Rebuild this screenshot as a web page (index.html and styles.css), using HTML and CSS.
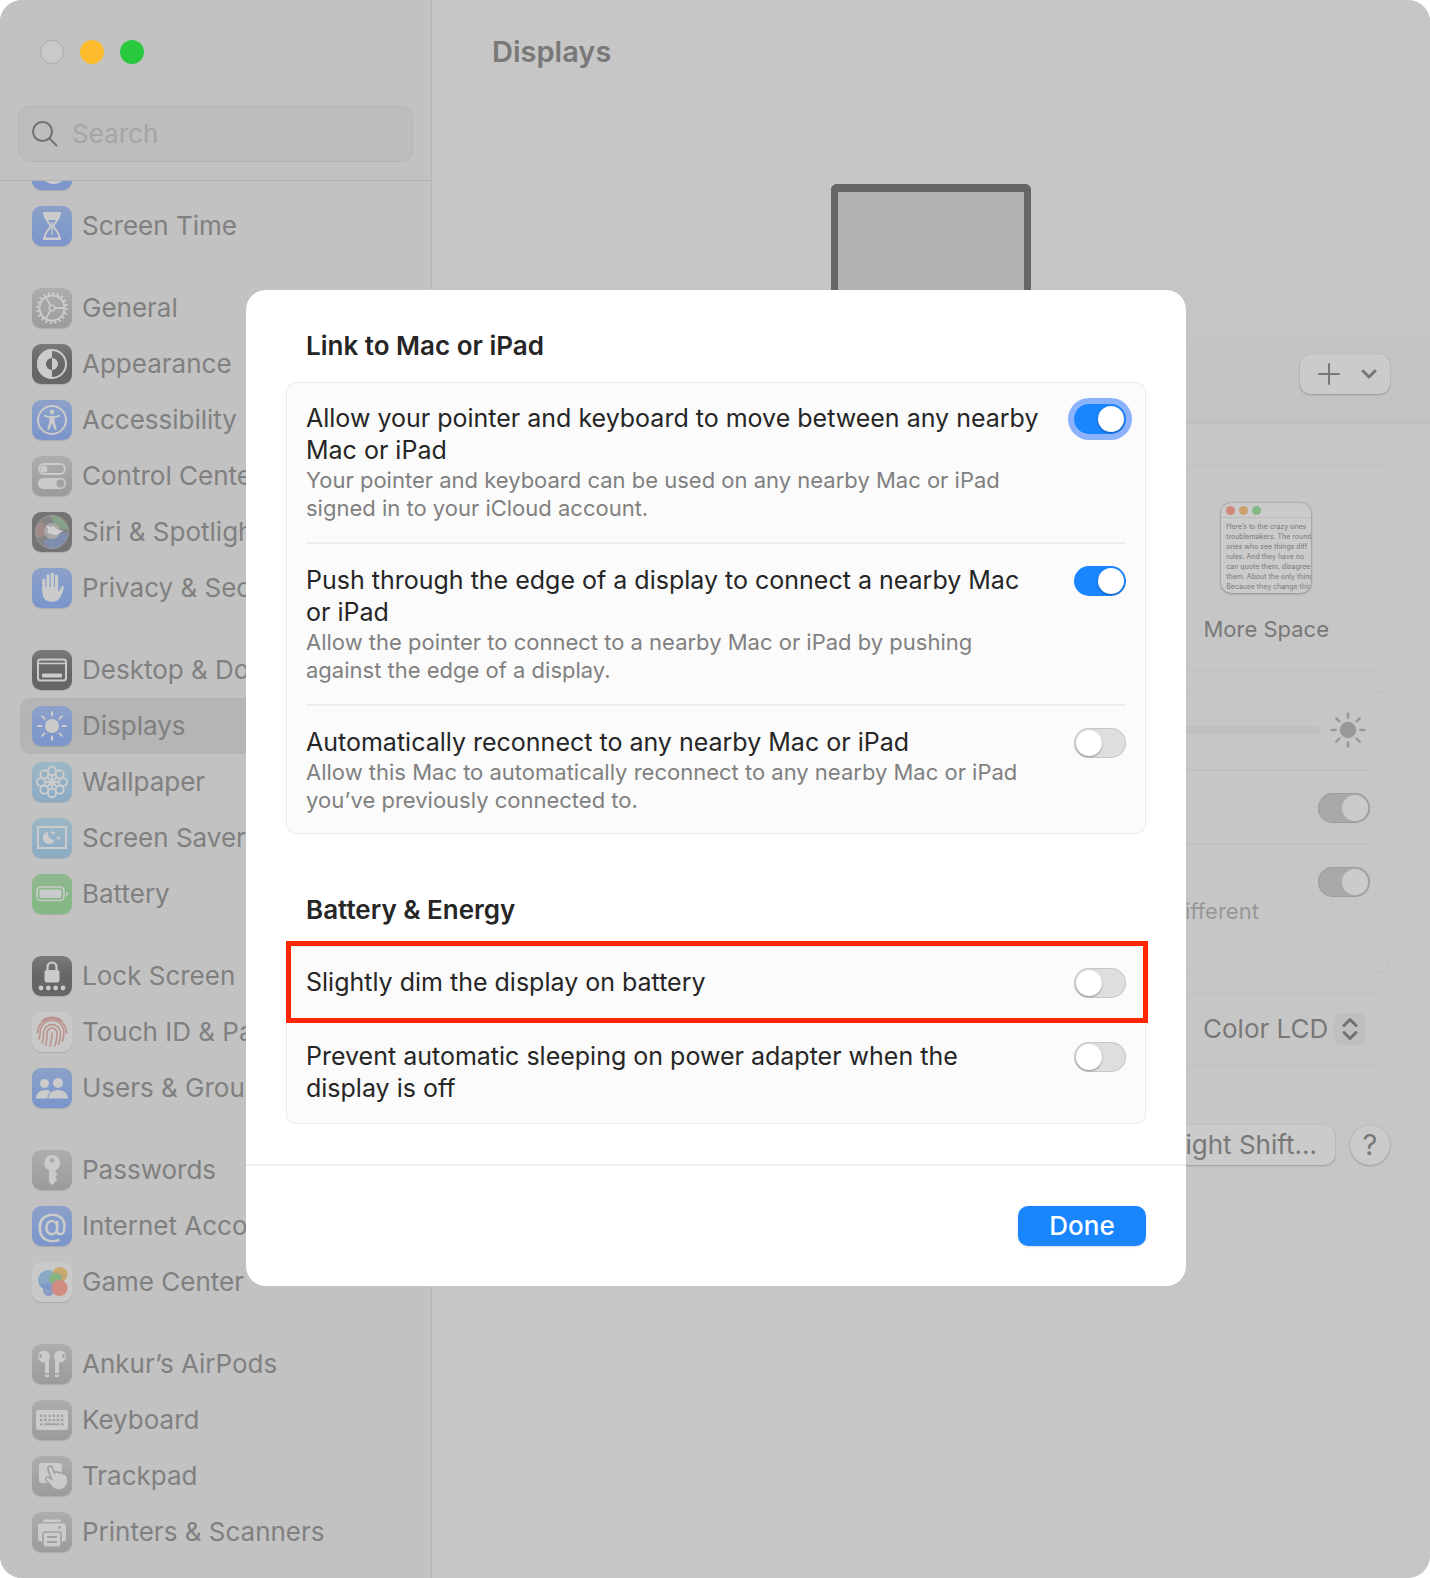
FILE: index.html
```html
<!DOCTYPE html>
<html lang="en">
<head>
    <meta charset="UTF-8" />
    <meta name="viewport" content="width=device-width, initial-scale=1" />
    <title>Displays</title>
    <link rel="stylesheet" href="styles.css">
</head>
<body>
    <div class="window">

        <aside class="sidebar">
            <div class="sidebar-top">
                <div class="traffic">
                    <span class="dot dot-close"></span>
                    <span class="dot dot-min"></span>
                    <span class="dot dot-zoom"></span>
                </div>
                <label class="search">
                    <svg width="26" height="26" viewBox="0 0 26 26" aria-hidden="true"><circle cx="10.5" cy="10.5" r="9.5" /><path d="M17.5 17.5L24.5 24.5" /></svg>
                    <input type="search" placeholder="Search" aria-label="Search">
                </label>
            </div>

            <nav class="nav">
                <ul class="nav-list">
                    <li><a href="#"><span class="icon blue"><svg viewBox="0 0 40 40"><path d="M20 6a14 14 0 1 0 14 20A14 14 0 0 1 20 6z" /><circle cx="20" cy="22" r="11" /></svg></span>Focus</a></li>
                    <li><a href="#"><span class="icon blue"><svg viewBox="0 0 40 40"><path d="M12 7.200h16M12 32.800h16" stroke-width="2.500" class="line" /><path d="M12.500 7C12.500 15 18.500 17 18.500 20S12.500 25 12.500 33M27.500 7C27.500 15 21.500 17 21.500 20S27.500 25 27.500 33" class="line" stroke-width="2" /><path d="M12 7h16c0 3-1 5-2.500 7h-11C13 12 12 10 12 7z" /><path d="M20 17v11" class="line" stroke-width="1.500" /></svg></span>Screen Time</a></li>

                    <li class="gap"><a href="#"><span class="icon gray"><svg viewBox="0 0 40 40"><circle cx="20" cy="20" r="14.500" class="line" stroke-width="3" stroke-dasharray="1.900 2.655" /><circle cx="20" cy="20" r="12.500" class="line" stroke-width="2" /><circle cx="20" cy="20" r="2.800" class="line" stroke-width="1.600" /><path d="M23 20h9M18.500 17.400L14 9.600M18.500 22.600L14 30.400" class="line" stroke-width="1.800" /></svg></span>General</a></li>
                    <li><a href="#"><span class="icon dark"><svg viewBox="0 0 40 40"><circle cx="20" cy="20" r="14" class="line" stroke-width="2" /><path d="M20 5a15 15 0 0 0 0 30v-9a6 6 0 0 1 0-12zM20 14a6 6 0 0 1 0 12z" /></svg></span>Appearance</a></li>
                    <li><a href="#"><span class="icon blue"><svg viewBox="0 0 40 40"><circle cx="20" cy="20" r="14" class="line" stroke-width="2" /><circle cx="20" cy="12" r="2.400" /><path d="M12 14.800c5 1.600 11 1.600 16 0v1.800c-2 .7-3.800 1-5.200 1.200v4l2 8h-2.200L20.300 24h-.6l-2.300 5.800h-2.200l2-8v-4c-1.400-.2-3.200-.5-5.200-1.200z" /></svg></span>Accessibility</a></li>
                    <li><a href="#"><span class="icon gray"><svg viewBox="0 0 40 40"><rect x="7" y="8" width="26" height="10" rx="5" class="line" stroke-width="2" /><circle cx="12" cy="13" r="3.500" /><rect x="6" y="22" width="28" height="11" rx="5.500" /><circle cx="28.500" cy="27.500" r="4" class="cut-gray" /></svg></span>Control Center</a></li>
                    <li><a href="#"><span class="icon siri"><svg viewBox="0 0 40 40"><circle cx="20" cy="20" r="16.500" fill="#858585" /><path d="M18 4c9-2 17 5 18.500 13L26 17z" fill="#87a088" /><path d="M4 21c0-6 2-10 5-12l9 10-9 7c-3 0-5-1-5-5z" fill="#a08b89" /><path d="M36 21c0 9-8 16-17 15-4-1-6-3-8-6l12-9z" fill="#7f8eae" /><circle cx="20" cy="19" r="8" fill="#a8a8a8" /><path d="M14 14c3-1 5 2 8 0 2 4 5 4 10 5-5 1-6 5-9 4s-5-1-8-3c2-1 1-4-1-6z" fill="#d0d0d0" /><circle cx="20" cy="20" r="16.500" class="rim" /></svg></span>Siri &amp; Spotlight</a></li>
                    <li><a href="#"><span class="icon blue"><svg viewBox="0 0 40 40"><path d="M11.800 12v12M16 7.500v14M20.300 6v14M24.600 8v14" class="line" stroke-width="3.200" /><path d="M10.200 19h16v5c1.500-1 2.500-4 3.500-5.500.8-1.200 2.600-.6 2.200 1-1 4-2.500 8-4.500 11-3 4.500-13 4.500-15.500-.5-1.500-3-1.700-6-1.700-11z" /></svg></span>Privacy &amp; Security</a></li>

                    <li class="gap"><a href="#"><span class="icon dark"><svg viewBox="0 0 40 40"><rect x="6" y="9.500" width="28" height="21" rx="2.500" class="line" stroke-width="2" /><path d="M7 13.500h26" class="line" stroke-width="1.600" /><rect x="10" y="23.500" width="20" height="4" rx="1" /></svg></span>Desktop &amp; Dock</a></li>
                    <li><a href="#" class="selected"><span class="icon blue"><svg viewBox="0 0 40 40"><circle cx="20" cy="20" r="7" /><path d="M20 6v3.500M20 30.500V34M6 20h3.500M30.500 20H34M10.100 10.100l2.500 2.500M27.400 27.400l2.500 2.500M29.900 10.100l-2.500 2.500M12.600 27.400l-2.500 2.500" class="line" stroke-width="2" /></svg></span>Displays</a></li>
                    <li><a href="#"><span class="icon sky"><svg viewBox="0 0 40 40"><g class="line" stroke-width="1.900"><ellipse cx="20" cy="9" rx="4" ry="4.200" /><ellipse cx="20" cy="31" rx="4" ry="4.200" /><ellipse cx="9" cy="20" rx="4.200" ry="4" /><ellipse cx="31" cy="20" rx="4.200" ry="4" /><circle cx="12.300" cy="12.300" r="4" /><circle cx="27.700" cy="12.300" r="4" /><circle cx="12.300" cy="27.700" r="4" /><circle cx="27.700" cy="27.700" r="4" /><path d="M20 13.500v13M13.500 20h13M15.400 15.400l9.200 9.200M24.600 15.400l-9.200 9.200" /></g><circle cx="20" cy="20" r="2.500" /></svg></span>Wallpaper</a></li>
                    <li><a href="#"><span class="icon sky"><svg viewBox="0 0 40 40"><rect x="6" y="9" width="28" height="21" class="line sharp" stroke-width="2" /><path d="M16 14a6 6 0 1 0 6.500 8A6.500 6.500 0 0 1 16 14zM21 12l.8 2 2 .8-2 .8-.8 2-.8-2-2-.8 2-.8zM26.500 17l.7 2.300 2 .7-2 .7-.7 2.300-.7-2.300-2-.7 2-.7z" /></svg></span>Screen Saver</a></li>
                    <li><a href="#"><span class="icon green"><svg viewBox="0 0 40 40"><rect x="5" y="13" width="27" height="13.500" rx="4" class="line" stroke-width="1.600" /><rect x="7.500" y="15.500" width="22" height="8.500" rx="2" /><path d="M34 17.500c2.500.8 2.500 4 0 4.800z" /></svg></span>Battery</a></li>

                    <li class="gap"><a href="#"><span class="icon dark"><svg viewBox="0 0 40 40"><rect x="12.500" y="14" width="15" height="12.500" rx="2.500" /><path d="M15.500 15v-4a4.500 4.500 0 0 1 9 0v4" class="line" stroke-width="2.200" /><circle cx="9" cy="32" r="2.400" /><circle cx="16.300" cy="32" r="2.400" /><circle cx="23.600" cy="32" r="2.400" /><circle cx="31" cy="32" r="2.400" /></svg></span>Lock Screen</a></li>
                    <li><a href="#"><span class="icon plain"><svg viewBox="0 0 40 40"><g class="finger"><path d="M10 9a15 15 0 0 1 20 0" /><path d="M5.500 21a14.500 14.500 0 0 1 29 0" /><path d="M7 27c1-2 1-4 1.200-7a11.800 11.800 0 0 1 23.600 0c.2 3-.3 6-1.300 9" /><path d="M10 31c1.500-3 1.500-7 1.500-10a8.500 8.500 0 0 1 17 0c0 4-.5 8-2 11.500" /><path d="M13.500 33c1.500-4 1.500-8 1.500-12a5 5 0 0 1 10 0c0 5-.5 9-2.500 13" /><path d="M18 34c1.500-4 2-8 2-13" /></g></svg></span>Touch ID &amp; Password</a></li>
                    <li><a href="#"><span class="icon blue"><svg viewBox="0 0 40 40"><circle cx="12.500" cy="15.500" r="4.500" /><path d="M4 30.500c0-5 4-8.500 9-8.500s5 1 5.500 2c-2 1.500-3 4-3 6.500z" /><circle cx="26" cy="15" r="5" /><path d="M16.500 30.500c0-5 4-8.500 9.500-8.500s10 3.500 10 8.500z" /></svg></span>Users &amp; Groups</a></li>

                    <li class="gap"><a href="#"><span class="icon gray"><svg viewBox="0 0 40 40"><path fill-rule="evenodd" d="M20 5a8 8 0 0 1 3.500 15.200V22l2.300 2.300-2.600 2.900 2 2.300L20.500 35 17 32V20.200A8 8 0 0 1 20 5zm0 3a2.300 2.300 0 1 0 0 4.600A2.300 2.300 0 0 0 20 8z" /></svg></span>Passwords</a></li>
                    <li><a href="#"><span class="icon blue at">@</span>Internet Accounts</a></li>
                    <li><a href="#"><span class="icon plain"><svg viewBox="0 0 40 40"><circle cx="16.500" cy="28.500" r="5.500" fill="#8c9cc4" /><circle cx="16" cy="18" r="10" fill="#8ba9c4" /><path d="M7 22a10 10 0 0 0 17 2l-6-3z" fill="#8098c6" /><circle cx="28" cy="12.500" r="7.500" fill="#c9a870" /><path d="M18 13a8 8 0 0 1 12 1 8 8 0 0 1-3 7 7 7 0 0 1-10-2z" fill="#86b284" /><circle cx="27.500" cy="26" r="8" fill="#d08c80" /></svg></span>Game Center</a></li>

                    <li class="gap"><a href="#"><span class="icon gray"><svg viewBox="0 0 40 40"><circle cx="12" cy="12.500" r="6" /><circle cx="28" cy="12.500" r="6" /><path d="M13 12h4v17h-4zM23 12h4v17h-4zM13 30.500h4v2.500h-4zM23 30.500h4v2.500h-4z" /><path d="M8.500 10v4M31.500 10v4" class="slot" /></svg></span>Ankur’s AirPods</a></li>
                    <li><a href="#"><span class="icon gray"><svg viewBox="0 0 40 40"><rect x="4" y="10" width="32" height="20" rx="2.500" /><path d="M8 15.700h24.500M8 20h24.500" class="keys" /><path d="M8 24.300h2.400M12.500 24.300h15M29.200 24.300h2.400" class="slot" /></svg></span>Keyboard</a></li>
                    <li><a href="#"><span class="icon gray"><svg viewBox="0 0 40 40"><rect x="7" y="7" width="23" height="20" rx="3" /><path d="M17 10.500c1.500-1 3 0 3.500 1.500l2 5c1.500-1.500 3.500-1.500 4.500 0 1.500-1 3.500-.5 4 1 2-.5 3.300.3 4 2 1.500 4 1.500 8-2 11.500-5 4-11 2.500-14-1.500l-5-6c-.8-2 1-3.400 3-2.500l2.500 1.500-3.500-9c-.4-1.500 0-2.900 1-3.500z" class="outlined" /></svg></span>Trackpad</a></li>
                    <li><a href="#"><span class="icon gray"><svg viewBox="0 0 40 40"><path d="M12 7.500h16l1 2.500H11z" /><rect x="6" y="11.500" width="28" height="18" rx="3" /><circle cx="27.500" cy="15.500" r="1.400" class="cut-gray" /><rect x="11" y="20" width="18" height="15" rx="2" class="outlined" /><path d="M15 25h10M15 30h10" class="slot" /></svg></span>Printers &amp; Scanners</a></li>
                </ul>
            </nav>
        </aside>

        <main class="main">
            <header class="hero">
                <h1>Displays</h1>
                <div class="laptop"></div>
                <div class="hero-actions">
                    <button type="button" class="btn add" aria-label="Add display">
                        <svg width="22" height="22" viewBox="0 0 22 22"><path d="M11 1v20M1 11h20" stroke-width="2" /></svg>
                        <svg width="16" height="16" viewBox="0 0 16 16"><path d="M2 5l6 6 6-6" stroke-width="3" /></svg>
                    </button>
                </div>
            </header>

            <div class="content">
                <section class="card sizes">
                    <div class="size">
                        <div class="thumb">
                            <div class="thumb-bar"><i class="r"></i><i class="y"></i><i class="g"></i></div>
                        </div>
                        <span>Larger Text</span>
                    </div>
                    <div class="size">
                        <div class="thumb">
                            <div class="thumb-bar"><i class="r"></i><i class="y"></i><i class="g"></i></div>
                            <p>Here’s to the crazy ones<br>troublemakers. The round<br>ones who see things diff<br>rules. And they have no<br>can quote them, disagree<br>them. About the only thing<br>Because they change things</p>
                        </div>
                        <span>More Space</span>
                    </div>
                </section>

                <section class="card">
                    <div class="row brightness">
                        <label class="row-text" for="brightness">Brightness</label>
                        <input type="range" id="brightness" min="0" max="100" value="40">
                        <svg width="36" height="36" viewBox="0 0 36 36" aria-hidden="true"><circle cx="18" cy="18" r="7" /><path d="M18 1.500v4M18 30.500v4M1.500 18h4M30.500 18h4M6.300 6.300l3 3M26.700 26.700l3 3M29.700 6.300l-3 3M9.300 26.700l-3 3" /></svg>
                    </div>
                    <div class="row">
                        <label class="row-text" for="auto">Automatically adjust brightness</label>
                        <input type="checkbox" class="switch dim" id="auto" checked>
                    </div>
                    <div class="row">
                        <div class="row-text">
                            <label for="tone">True Tone</label>
                            <p>Automatically adapt displays to make colors appear consistent in different<br>ambient lighting conditions.</p>
                        </div>
                        <input type="checkbox" class="switch dim" id="tone" checked>
                    </div>
                </section>

                <section class="card">
                    <div class="row">
                        <label class="row-text" for="profile">Color profile</label>
                        <div class="picker">
                            <select id="profile"><option>Color LCD</option></select>
                            <svg width="32" height="32" viewBox="0 0 32 32" aria-hidden="true"><path d="M10 12.500l6-6 6 6M10 19.500l6 6 6-6" /></svg>
                        </div>
                    </div>
                </section>

                <div class="actions">
                    <button type="button" class="btn">Night Shift...</button>
                    <button type="button" class="btn help">?</button>
                </div>
            </div>
        </main>

        <div class="overlay">
            <div class="modal" role="dialog" aria-label="Advanced">
                <div class="modal-body">
                    <section>
                        <h2>Link to Mac or iPad</h2>
                        <div class="card">
                            <div class="row">
                                <div class="row-text">
                                    <label for="pointer">Allow your pointer and keyboard to move between any nearby<br>Mac or iPad</label>
                                    <p>Your pointer and keyboard can be used on any nearby Mac or iPad<br>signed in to your iCloud account.</p>
                                </div>
                                <input type="checkbox" class="switch focused" id="pointer" checked>
                            </div>
                            <div class="row">
                                <div class="row-text">
                                    <label for="push">Push through the edge of a display to connect a nearby Mac<br>or iPad</label>
                                    <p>Allow the pointer to connect to a nearby Mac or iPad by pushing<br>against the edge of a display.</p>
                                </div>
                                <input type="checkbox" class="switch" id="push" checked>
                            </div>
                            <div class="row">
                                <div class="row-text">
                                    <label for="reconnect">Automatically reconnect to any nearby Mac or iPad</label>
                                    <p>Allow this Mac to automatically reconnect to any nearby Mac or iPad<br>you’ve previously connected to.</p>
                                </div>
                                <input type="checkbox" class="switch" id="reconnect">
                            </div>
                        </div>
                    </section>

                    <section>
                        <h2>Battery &amp; Energy</h2>
                        <div class="card">
                            <div class="row highlight">
                                <label class="row-text" for="dim">Slightly dim the display on battery</label>
                                <input type="checkbox" class="switch" id="dim">
                            </div>
                            <div class="row">
                                <label class="row-text" for="sleep">Prevent automatic sleeping on power adapter when the<br>display is off</label>
                                <input type="checkbox" class="switch" id="sleep">
                            </div>
                        </div>
                    </section>
                </div>
                <footer class="modal-footer">
                    <button type="button" class="done">Done</button>
                </footer>
            </div>
        </div>
    </div>
</body>
</html>
```
FILE: styles.css
```css
* {
    box-sizing: border-box;
}
body {
    margin: 0;
    background: #fff;
    font-family: Inter, "Liberation Sans", sans-serif;
    font-size: 26px;
    line-height: 32px;
}
h1, h2, p, ul {
    margin: 0;
    padding: 0;
}
button, input, select {
    font: inherit;
    color: inherit;
    margin: 0;
}
.window {
    position: relative;
    display: flex;
    min-height: 100vh;
    border-radius: 22px;
    overflow: hidden;
    background: #c6c6c6;
    color: #787878;
}

/* sidebar */
.sidebar {
    flex: none;
    width: 432px;
    background: #c2c2c2;
    border-right: 1px solid #b5b5b5;
}
.sidebar-top {
    padding: 40px 18px 18px;
    border-bottom: 1px solid #b0b0b0;
}
.traffic {
    display: flex;
    gap: 16px;
    padding-left: 22px;
    margin-bottom: 42px;
}
.dot {
    width: 24px;
    height: 24px;
    border-radius: 50%;
}
.dot-close {
    background: #cacaca;
    border: 1px solid #a9a9a9;
}
.dot-min {
    background: #fdbc2e;
}
.dot-zoom {
    background: #29c83f;
}
.search {
    display: flex;
    align-items: center;
    gap: 14px;
    height: 56px;
    padding: 0 13px;
    background: #bdbdbd;
    border: 1px solid #b5b5b5;
    border-radius: 12px;
}
.search svg {
    flex: none;
    fill: none;
    stroke: #707070;
    stroke-width: 2;
    stroke-linecap: round;
}
.search input {
    flex: 1;
    min-width: 0;
    padding: 0;
    border: 0;
    outline: 0;
    background: none;
}
.search input::placeholder {
    color: #a5a5a5;
}
.nav {
    overflow: hidden;
}
/* list is scrolled a little past its first row */
.nav-list {
    list-style: none;
    margin-top: -39px;
    padding: 0 20px 18px;
}
.nav-list .gap {
    margin-top: 26px;
}
.nav-list a {
    display: flex;
    align-items: center;
    gap: 10px;
    height: 56px;
    padding: 0 12px;
    border-radius: 10px;
    color: #808080;
    text-decoration: none;
    white-space: nowrap;
}
.nav-list a.selected {
    background: #b5b5b5;
}
.icon {
    flex: none;
    width: 40px;
    height: 40px;
    border-radius: 9px;
    box-shadow: 0 1px 1px rgba(0,0,0,0.12);
}
.icon svg {
    display: block;
    width: 40px;
    height: 40px;
    fill: #cbcbcb;
}
.icon .line {
    fill: none;
    stroke: #cbcbcb;
    stroke-linecap: round;
}
.icon circle.line, .icon .sharp {
    stroke-linecap: butt;
}
.icon .slot {
    fill: none;
    stroke: #a2a2a2;
    stroke-width: 2;
}
.icon .keys {
    fill: none;
    stroke: #a2a2a2;
    stroke-width: 2.4;
    stroke-dasharray: 2.4 1.8;
}
.icon .outlined {
    stroke: #a2a2a2;
    stroke-width: 1.6;
}
.icon .rim {
    fill: none;
    stroke: #9c9c9c;
    stroke-width: 1;
}
.icon .finger {
    fill: none;
    stroke: #b98f8a;
    stroke-width: 1.5;
    stroke-linecap: round;
}
.cut-gray {
    fill: #a2a2a2;
}
.blue {
    background: linear-gradient(#8ba1c9, #7b95cb);
}
.gray {
    background: linear-gradient(#adadad, #9b9b9b);
}
.dark {
    background: linear-gradient(#7a7a7a, #666 50%);
}
.siri {
    background: #747474;
}
.sky {
    background: linear-gradient(#9cb8c6, #8aaac4);
}
.green {
    background: linear-gradient(#8fb88f, #82b882);
}
.plain {
    background: #c9c9c9;
}
.at {
    color: #cbcbcb;
    font-size: 32px;
    line-height: 38px;
    text-align: center;
}

/* main pane */
.main {
    flex: 1;
    min-width: 0;
}
.hero {
    padding: 32px 40px 28px;
    border-bottom: 2px solid #bfbfbf;
    background: linear-gradient(#c6c6c6 60%, #c3c3c3);
}
.hero h1 {
    padding-left: 20px;
    font-size: 29px;
    line-height: 40px;
    font-weight: 600;
}
.laptop {
    width: 200px;
    height: 130px;
    margin: 112px auto 40px;
    border: 7px solid #666;
    border-top-width: 8px;
    border-bottom-width: 0;
    border-radius: 6px 6px 0 0;
    background: #b2b2b2;
}
.hero-actions {
    display: flex;
    justify-content: flex-end;
}
.btn {
    height: 40px;
    padding: 0 18px;
    border: 0;
    border-radius: 10px;
    background: #cbcbcb;
    box-shadow: 0 0 1px rgba(0,0,0,0.2), 0 1px 2px rgba(0,0,0,0.2);
}
.add {
    display: flex;
    align-items: center;
    justify-content: space-between;
    width: 90px;
    padding: 0 13px 0 18px;
}
.add svg, .picker svg {
    fill: none;
    stroke: #787878;
    stroke-linecap: round;
    stroke-linejoin: round;
}
.help {
    width: 40px;
    padding: 0;
    border-radius: 50%;
    font-size: 29px;
}
.content {
    display: flex;
    flex-direction: column;
    gap: 20px;
    padding: 40px;
}
.card {
    border-radius: 10px;
    box-shadow: inset 0 0 0 1px #c0c0c0;
}
.sizes {
    display: flex;
    justify-content: space-between;
    height: 207px;
    padding: 39px 61px 0;
}
.size {
    display: flex;
    flex-direction: column;
    align-items: center;
    gap: 20px;
    font-size: 22px;
    white-space: nowrap;
}
.thumb {
    width: 90px;
    height: 90px;
    border-radius: 10px;
    overflow: hidden;
    background: #cbcbcb;
    box-shadow: 0 0 2px rgba(0,0,0,0.3), 0 1px 3px rgba(0,0,0,0.2);
}
.thumb-bar {
    display: flex;
    align-items: center;
    gap: 4px;
    height: 15px;
    padding-left: 5px;
    border-bottom: 1px solid #bbb;
}
.thumb-bar i {
    width: 9px;
    height: 9px;
    border-radius: 50%;
}
.thumb-bar .r {
    background: #d0887c;
}
.thumb-bar .y {
    background: #cda070;
}
.thumb-bar .g {
    background: #86b886;
}
.thumb p {
    padding: 4px 0 0 5px;
    font-size: 7px;
    line-height: 10px;
}
.row {
    display: flex;
    align-items: flex-start;
    gap: 10px;
    margin: 0 20px;
    padding: 20px 0;
}
.row + .row {
    border-top: 2px solid #c0c0c0;
}
.row-text {
    flex: 1;
    min-width: 0;
}
.row-text label {
    display: block;
}
.row-text p {
    font-size: 22px;
    line-height: 28px;
    color: #989898;
    white-space: nowrap;
}
.brightness {
    align-items: center;
    height: 78px;
    padding: 0;
    margin-right: 24px;
}
.brightness svg {
    fill: #989898;
    stroke: #989898;
    stroke-width: 2.5;
    stroke-linecap: round;
}
.brightness input {
    appearance: none;
    width: 400px;
    height: 8px;
    border-radius: 4px;
    background: #bfbfbf;
}
.brightness input::-webkit-slider-thumb {
    appearance: none;
    width: 24px;
    height: 24px;
    border-radius: 50%;
    background: #cbcbcb;
}
.picker {
    position: relative;
}
.picker select {
    display: block;
    appearance: none;
    height: 32px;
    padding: 0 41px 0 0;
    border: 0;
    background: none;
}
.picker svg {
    position: absolute;
    top: 0;
    right: 4px;
    border-radius: 8px;
    background: #bfbfbf;
    stroke: #707070;
    stroke-width: 3;
    pointer-events: none;
}
.actions {
    display: flex;
    justify-content: flex-end;
    gap: 15px;
    margin-top: 40px;
}

/* switches */
.switch {
    appearance: none;
    flex: none;
    width: 52px;
    height: 30px;
    margin: 2px 0 0;
    padding: 2px;
    border-radius: 15px;
    background: #dedede;
    box-shadow: inset 0 0 0 1px #c8c8c8;
}
.switch::before {
    content: "";
    display: block;
    width: 26px;
    height: 26px;
    border-radius: 50%;
    background: #fff;
    box-shadow: 0 1px 2px rgba(0,0,0,0.35);
}
.switch:checked {
    background: #1985ff;
    box-shadow: none;
}
.switch:checked::before {
    margin-left: 22px;
}
.switch.focused {
    box-shadow: 0 0 0 6px #8cb2fc;
}
.switch.dim {
    background: #a9a9a9;
    box-shadow: inset 0 0 0 1px #9c9c9c;
}
.switch.dim::before {
    background: #cbcbcb;
    box-shadow: none;
}

/* sheet */
.overlay {
    position: absolute;
    inset: 0;
    display: flex;
    justify-content: center;
    align-items: flex-start;
    padding: 290px 0 0 2px;
}
.modal {
    width: 940px;
    border-radius: 20px;
    background: #fff;
    color: #262626;
}
.modal-body {
    display: flex;
    flex-direction: column;
    gap: 60px;
    padding: 40px;
}
.modal h2 {
    margin: 0 20px 20px;
    font-size: 26px;
    line-height: 32px;
    font-weight: 600;
}
.modal .card {
    background: #fbfbfb;
    box-shadow: inset 0 0 0 1px #ececec;
}
.modal .row + .row {
    border-color: #eee;
}
.modal .row-text {
    font-size: 25px;
}
.modal .row-text p {
    color: #808080;
}
.highlight {
    position: relative;
}
.highlight::after {
    content: "";
    position: absolute;
    inset: -5px -22px -5px -20px;
    border: 5px solid #ff2600;
    pointer-events: none;
}
.modal-footer {
    display: flex;
    justify-content: flex-end;
    padding: 40px;
    border-top: 2px solid #eee;
}
.done {
    width: 128px;
    height: 40px;
    padding: 0;
    border: 0;
    border-radius: 10px;
    background: #1985ff;
    color: #fff;
    font-weight: 500;
    box-shadow: 0 1px 2px rgba(0,0,0,0.15);
}
```
